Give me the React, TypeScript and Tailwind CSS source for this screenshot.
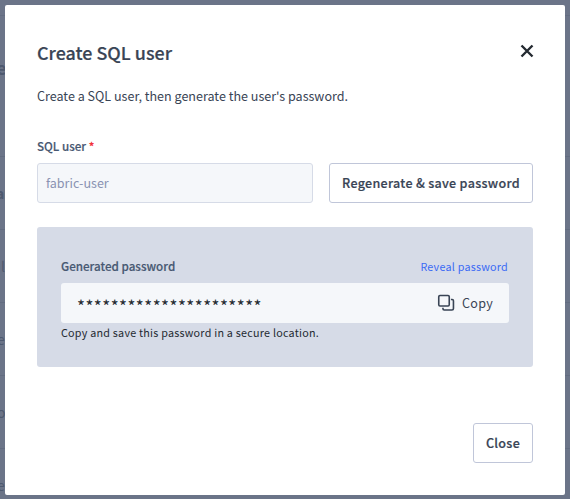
const rows = [
  { text: 'ar', style: '-ml-[4px] text-[14px] font-bold' },
  { text: 'l', style: 'ml-[1px] text-[14px]' },
  { text: 'e', style: '-ml-[3px] text-[14px]' },
  { text: 'o', style: '-ml-[3px] text-[14px]' },
  { text: 'e', style: '-ml-[3px] text-[14px]' },
];

function Backdrop() {
  return (
    <div aria-hidden="true" className="h-full w-full overflow-hidden bg-[#6b7488] text-[#4e596f]">
      <div className="h-[16px] border-b border-[#636d81]" />
      <div className="flex h-[141px] items-start border-b border-[#626c80] pt-[38px]">
        <span className="-ml-[4px] text-[18px] leading-[26px] font-bold">e</span>
      </div>
      {rows.map((row, i) => (
        <div key={i} className="flex h-[73px] items-center border-b border-[#626c80]">
          <span className={row.style}>{row.text}</span>
        </div>
      ))}
    </div>
  );
}

function CopyIcon() {
  return (
    <svg width="18" height="18" viewBox="0 0 18 18" fill="none" stroke="#394455" strokeWidth="1.6">
      <rect x="1.75" y="1.5" width="10.5" height="10.5" rx="1.2" />
      <path d="M13.9 5.5h1.3a1.25 1.25 0 0 1 1.25 1.25v7.75a1.5 1.5 0 0 1-1.5 1.5H7.2a1.25 1.25 0 0 1-1.25-1.25v-1" />
    </svg>
  );
}

export default function App() {
  return (
    <div className="relative h-[499px] w-[570px] overflow-hidden font-['Noto_Sans_CJK_SC',sans-serif] text-[#394455]">
      <Backdrop />
      <div role="dialog" className="absolute inset-[5px] bottom-[4px] flex flex-col rounded-[2px] bg-white px-8 pt-[33px]">
        <div className="flex h-7 items-center justify-between">
          <h2 className="text-[17.9px] leading-7 font-medium whitespace-nowrap [-webkit-text-stroke:0.2px]">Create SQL user</h2>
          <button aria-label="Close dialog" className="mt-[-2px] mr-[-1px]">
            <svg width="14" height="14" viewBox="0 0 14 14" stroke="#242a31" strokeWidth="2.4" fill="none">
              <path d="M1.5 1.5l11 11M12.5 1.5l-11 11" />
            </svg>
          </button>
        </div>
        <p className="mt-[20px] text-[12.55px] leading-5 whitespace-nowrap">Create a SQL user, then generate the user's password.</p>
        <label className="mt-[30px] text-[11.65px] leading-5 font-medium whitespace-nowrap text-[#475872] [-webkit-text-stroke:0.15px]">
          SQL user <span className="text-[#f2303a] [-webkit-text-stroke:0.2px_#f2303a]">*</span>
        </label>
        <div className="mt-[7px] flex gap-4">
          <div className="flex h-10 w-[276px] items-center rounded-[3px] border border-[#d6dbe7] bg-[#f5f7fa] px-2 text-[12.55px] text-[#8a93b2]">
            fabric-user
          </div>
          <button className="h-10 w-[204px] rounded-[3px] border border-[#c0c6d9] text-[12.55px] font-medium tracking-[0.3px] whitespace-nowrap [-webkit-text-stroke:0.2px]">
            Regenerate &amp; save password
          </button>
        </div>
        <section className="mt-6 flex h-[140px] flex-col rounded-[3px] bg-[#d6dbe7] px-6 pt-[30px]">
          <div className="flex h-5 items-center justify-between whitespace-nowrap">
            <span className="pb-[2px] text-[11.65px] font-medium text-[#475872] [-webkit-text-stroke:0.15px]">Generated password</span>
            <a className="mr-px text-[10.75px] tracking-[0.24px] text-[#3a6af5]">Reveal password</a>
          </div>
          <div className="mt-[6px] flex h-10 items-center justify-between rounded-[3px] bg-[#f5f7fa] px-4">
            <span className="pt-[6px] text-[17px] leading-6 tracking-[0.47px] text-[#242a31]">**********************</span>
            <button className="flex items-center gap-[7px] text-[12.55px] tracking-[0.3px]">
              <CopyIcon />
              Copy
            </button>
          </div>
          <p className="text-[10.75px] leading-5 tracking-[0.24px] whitespace-nowrap text-[#242a31]">Copy and save this password in a secure location.</p>
        </section>
        <button className="mt-14 h-10 w-[60px] self-end rounded-[3px] border border-[#c0c6d9] text-[12.55px] font-medium tracking-[0.28px] [-webkit-text-stroke:0.2px]">
          Close
        </button>
      </div>
    </div>
  );
}
